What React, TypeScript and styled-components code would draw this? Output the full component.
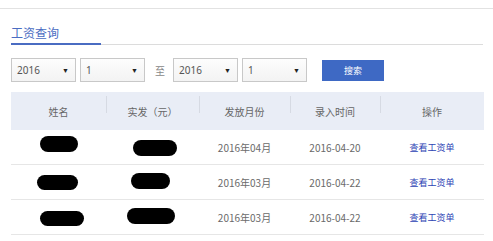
import React from "react";
import styled, { createGlobalStyle } from "styled-components";

const Global = createGlobalStyle`
  html, body { margin: 0; padding: 0; background: #fff; }
  body { font-family: "Noto Sans CJK SC", "Liberation Sans", sans-serif; color: #555; }
`;

const Page = styled.div`
  padding-top: 8px;
  width: 493px;
  height: 241px;
  box-sizing: border-box;
  overflow: hidden;
`;

const TopRule = styled.div`
  border-top: 1px solid #e2e2e2;
`;

const Section = styled.div`
  padding: 0 10px 0 11px;
`;

const TitleBar = styled.div`
  margin-top: 16px;
  border-bottom: 1px solid #dcdcdc;
  display: flex;
`;

const TitleTab = styled.div`
  width: 90px;
  font-size: 12px;
  line-height: 16px;
  color: #4a6cc2;
  padding-bottom: 2px;
  border-bottom: 2px solid #4a6cc2;
  margin-bottom: -1px;
`;

const FilterRow = styled.div`
  display: flex;
  align-items: center;
  margin-top: 13px;
  height: 24px;
`;

const SelectBox = styled.div<{ $gap?: number }>`
  width: 65px;
  height: 24px;
  box-sizing: border-box;
  border: 1px solid #c8c8c8;
  background: linear-gradient(#fdfdfd, #f3f3f3);
  display: flex;
  align-items: center;
  justify-content: space-between;
  padding: 0 6px 0 5px;
  margin-left: ${(p) => p.$gap ?? 0}px;
  font-family: "Noto Sans", "Liberation Sans", sans-serif;
  font-size: 10px;
  color: #555;
`;

const Arrow = styled.span`
  font-size: 7px;
  color: #222;
`;

const ToLabel = styled.span`
  margin: 0 8px 0 10px;
  font-size: 10px;
  color: #888;
`;

const SearchButton = styled.button`
  margin-left: 15px;
  width: 62px;
  height: 21px;
  border: none;
  background: #3e69c4;
  color: #fff;
  font-family: "Noto Sans CJK SC", sans-serif;
  font-size: 9px;
  padding: 0;
`;

const Table = styled.div`
  margin-top: 10px;
  width: 473px;
`;

const cols = "95px 93px 91px 90px 104px";

const HeadRow = styled.div`
  display: grid;
  grid-template-columns: ${cols};
  height: 38px;
  background: #e9edf6;
  align-items: center;
`;

const HeadCell = styled.div<{ $sep?: boolean }>`
  position: relative;
  text-align: center;
  font-size: 10px;
  color: #666;
  ${(p) =>
    p.$sep
      ? `&::before { content: ""; position: absolute; left: 0; top: -8px; width: 1px; height: 17px; background: #d6dae3; }`
      : ""}
`;

const BodyRow = styled.div`
  display: grid;
  grid-template-columns: ${cols};
  height: 35px;
  box-sizing: border-box;
  border-bottom: 1px solid #e6e6e6;
  align-items: center;
`;

const Cell = styled.div`
  display: flex;
  justify-content: center;
  align-items: center;
  font-family: "Noto Sans CJK SC", sans-serif;
  font-size: 10px;
  color: #6a6a6a;
`;

const Blob = styled.span<{ $w: number; $h: number; $dx: number; $dy: number }>`
  display: block;
  width: ${(p) => p.$w}px;
  height: ${(p) => p.$h}px;
  background: #000;
  border-radius: ${(p) => p.$h / 2}px;
  transform: translate(${(p) => p.$dx}px, ${(p) => p.$dy}px);
`;

const Link = styled.a`
  font-size: 9px;
  color: #2c42b4;
  text-decoration: none;
`;

const rows = [
  { month: "2016年04月", date: "2016-04-20", name: [38, 16, 0, -3], amt: [44, 16, 2, 1] },
  { month: "2016年03月", date: "2016-04-22", name: [41, 15, -1, 0], amt: [39, 16, -2, -1] },
  { month: "2016年03月", date: "2016-04-22", name: [44, 15, 3, 1], amt: [48, 16, -2, -1] },
];

export default function App() {
  return (
    <Page>
      <Global />
      <TopRule />
      <Section>
        <TitleBar>
          <TitleTab>工资查询</TitleTab>
        </TitleBar>
        <FilterRow>
          <SelectBox>
            <span>2016</span>
            <Arrow>▼</Arrow>
          </SelectBox>
          <SelectBox $gap={4}>
            <span>1</span>
            <Arrow>▼</Arrow>
          </SelectBox>
          <ToLabel>至</ToLabel>
          <SelectBox>
            <span>2016</span>
            <Arrow>▼</Arrow>
          </SelectBox>
          <SelectBox $gap={4}>
            <span>1</span>
            <Arrow>▼</Arrow>
          </SelectBox>
          <SearchButton>搜索</SearchButton>
        </FilterRow>
        <Table>
          <HeadRow>
            <HeadCell>姓名</HeadCell>
            <HeadCell $sep>实发（元）</HeadCell>
            <HeadCell $sep>发放月份</HeadCell>
            <HeadCell $sep>录入时间</HeadCell>
            <HeadCell $sep>操作</HeadCell>
          </HeadRow>
          {rows.map((r, i) => (
            <BodyRow key={i}>
              <Cell>
                <Blob $w={r.name[0]} $h={r.name[1]} $dx={r.name[2]} $dy={r.name[3]} />
              </Cell>
              <Cell>
                <Blob $w={r.amt[0]} $h={r.amt[1]} $dx={r.amt[2]} $dy={r.amt[3]} />
              </Cell>
              <Cell>{r.month}</Cell>
              <Cell>{r.date}</Cell>
              <Cell>
                <Link href="#">查看工资单</Link>
              </Cell>
            </BodyRow>
          ))}
        </Table>
      </Section>
    </Page>
  );
}
